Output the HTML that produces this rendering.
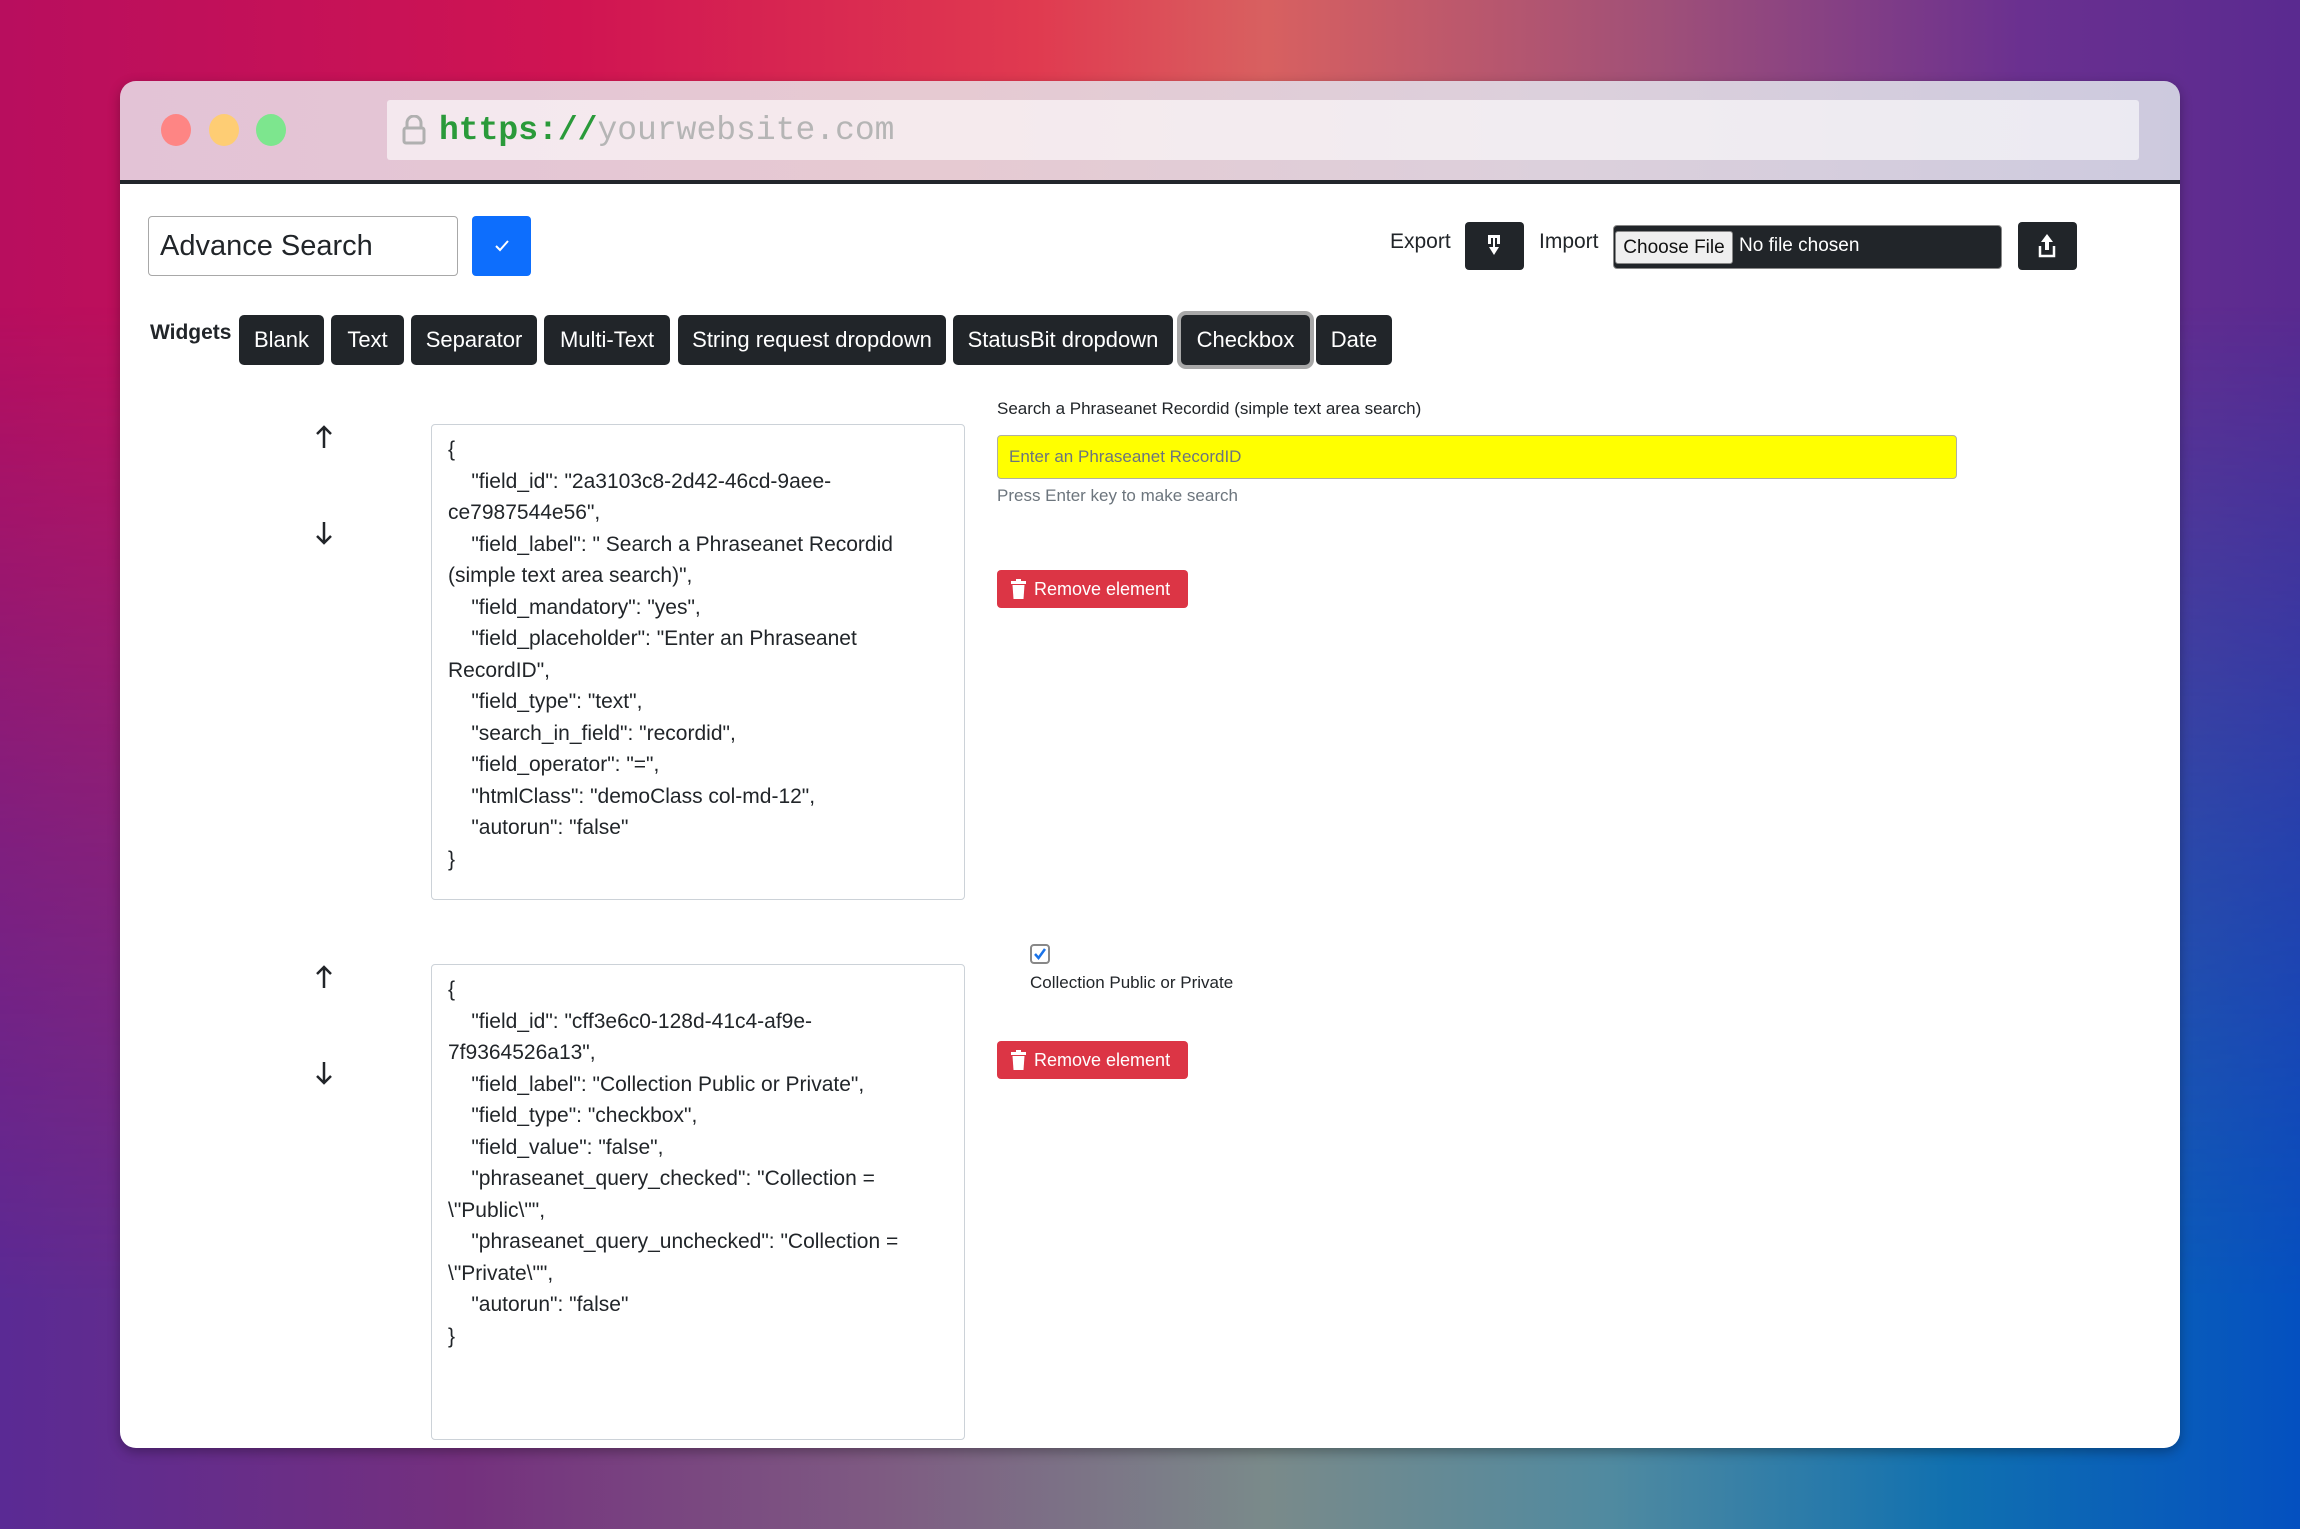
<!DOCTYPE html>
<html><head><meta charset="utf-8">
<style>
*{box-sizing:border-box;margin:0;padding:0}
body{width:2300px;height:1529px;position:relative;overflow:hidden;font-family:"Liberation Sans",Arial,sans-serif;color:#212529}
.bg1{position:absolute;inset:0;background:linear-gradient(90deg,#b80e5e 0%,#d01452 25%,#e03a50 45%,#d86060 55%,#a05078 72%,#6a3090 88%,#5a2a90 100%)}
.bg2{position:absolute;inset:0;background:linear-gradient(90deg,#5a2a94 0%,#74307e 20%,#7e5a82 38%,#7a8a8a 55%,#508aa0 70%,#1070b0 85%,#0450c0 100%);-webkit-mask-image:linear-gradient(180deg,transparent 20%,rgba(0,0,0,.6) 55%,#000 85%)}
.win{position:absolute;left:120px;top:81px;width:2060px;height:1367px;border-radius:16px;overflow:hidden;box-shadow:0 4px 12px rgba(0,0,0,.3)}
.title{position:absolute;left:0;top:0;width:100%;height:104px;background:linear-gradient(90deg,#e3c3d6,#e6cad2 40%,#dcd0dc 70%,#cdcade);border-bottom:5px solid #22262b}
.dot{position:absolute;top:33px;width:30px;height:32px;border-radius:50%}
.url{position:absolute;left:267px;top:19px;width:1752px;height:60px;background:rgba(255,255,255,.6);border-radius:3px}
.url span{position:absolute;left:52px;top:12px;font-family:"Liberation Mono",monospace;font-size:33px;color:#b5b5b5}
.content{position:absolute;left:0;top:103px;width:100%;height:1264px;background:#fff;overflow:hidden}
.inner{position:absolute;left:0;top:-79px;width:100%;height:1400px}
.a{position:absolute}
.btn{position:absolute;background:#212529;color:#fff;border-radius:5px;font-size:22px;line-height:50px;text-align:center;height:50px;top:210px}
pre{position:absolute;border:1px solid #ccd2d8;border-radius:4px;font-family:"Liberation Sans",Arial,sans-serif;font-size:21px;line-height:31.5px;padding:9px 16px;white-space:pre-wrap;color:#212529}
.rm{position:absolute;left:877px;width:191px;height:38px;background:#dc3545;color:#fff;border-radius:4px;font-size:18px;line-height:38px;padding-left:37px}
.rm svg{position:absolute;left:14px;top:9px}
.arr{position:absolute;left:194px}
</style></head><body>
<div class="bg1"></div><div class="bg2"></div>
<div class="win">
 <div class="title">
  <div class="dot" style="left:41px;background:#fe8584"></div>
  <div class="dot" style="left:89px;background:#fecd74"></div>
  <div class="dot" style="left:136px;background:#7de68e"></div>
  <div class="url">
   <svg style="position:absolute;left:15px;top:15px" width="24" height="30" viewBox="0 0 24 30"><path d="M5 13V8a7 7 0 0 1 14 0v5" fill="none" stroke="#b0b0b0" stroke-width="3"/><rect x="2" y="13" width="20" height="15" rx="2" fill="none" stroke="#b0b0b0" stroke-width="3"/></svg>
   <span><b style="color:#2a9a3a;font-weight:bold">https://</b>yourwebsite.com</span>
  </div>
 </div>
 <div class="content"><div class="inner">
  <div class="a" style="left:28px;top:111px;width:310px;height:60px;border:1px solid #a8a8a8;border-radius:4px;font-size:29px;line-height:58px;padding-left:11px">Advance Search</div>
  <div class="a" style="left:352px;top:111px;width:59px;height:60px;background:#0d6efd;border-radius:4px"><svg style="position:absolute;left:22px;top:23px" width="16" height="14" viewBox="0 0 16 14"><path d="M2 7l4 4 8-9" fill="none" stroke="#fff" stroke-width="2"/></svg></div>
  <div class="a" style="left:1270px;top:125px;font-size:21px">Export</div>
  <div class="a" style="left:1345px;top:117px;width:59px;height:48px;background:#212529;border-radius:4px"><svg style="position:absolute;left:20px;top:11px" width="18" height="26" viewBox="0 0 18 26"><path d="M3 2h12v9h-3v-6h-2v9h4l-5 8-5-8h4v-9h-2v6h-3z" fill="#fff"/></svg></div>
  <div class="a" style="left:1419px;top:125px;font-size:21px">Import</div>
  <div class="a" style="left:1493px;top:120px;width:389px;height:44px;background:#212529;border:1px solid #888;border-radius:4px">
   <div class="a" style="left:1px;top:5px;width:118px;height:33px;background:#efefef;border:1px solid #888;border-radius:3px;font-size:19px;line-height:31px;text-align:center;color:#111">Choose File</div>
   <div class="a" style="left:125px;top:9px;font-size:19px;color:#fff">No file chosen</div>
  </div>
  <div class="a" style="left:1898px;top:117px;width:59px;height:48px;background:#212529;border-radius:4px"><svg style="position:absolute;left:19px;top:11px" width="20" height="26" viewBox="0 0 20 26"><path d="M10 1l-6 8h4v8h4v-8h4z" fill="#fff"/><path d="M3 13v10h14v-10" fill="none" stroke="#fff" stroke-width="2.5"/></svg></div>

  <div class="a" style="left:30px;top:216px;font-size:21px;font-weight:bold">Widgets</div>
  <div class="btn" style="left:119px;width:85px">Blank</div>
  <div class="btn" style="left:211px;width:73px">Text</div>
  <div class="btn" style="left:291px;width:126px">Separator</div>
  <div class="btn" style="left:424px;width:126px">Multi-Text</div>
  <div class="btn" style="left:558px;width:268px">String request dropdown</div>
  <div class="btn" style="left:833px;width:220px">StatusBit dropdown</div>
  <div class="btn" style="left:1061px;width:129px;box-shadow:0 0 0 4px #a8a8a8">Checkbox</div>
  <div class="btn" style="left:1196px;width:76px">Date</div>

  <svg class="arr" style="top:319px" width="20" height="26" viewBox="0 0 20 26"><path d="M10 24V3M3 10l7-7 7 7" fill="none" stroke="#212529" stroke-width="2.5"/></svg>
  <svg class="arr" style="top:415px" width="20" height="26" viewBox="0 0 20 26"><path d="M10 2v21M3 16l7 7 7-7" fill="none" stroke="#212529" stroke-width="2.5"/></svg>
  <pre style="left:311px;top:319px;width:534px;height:476px">{
    "field_id": "2a3103c8-2d42-46cd-9aee-ce7987544e56",
    "field_label": " Search a Phraseanet Recordid (simple text area search)",
    "field_mandatory": "yes",
    "field_placeholder": "Enter an Phraseanet RecordID",
    "field_type": "text",
    "search_in_field": "recordid",
    "field_operator": "=",
    "htmlClass": "demoClass col-md-12",
    "autorun": "false"
}</pre>
  <div class="a" style="left:877px;top:294px;font-size:17px">Search a Phraseanet Recordid (simple text area search)</div>
  <div class="a" style="left:877px;top:330px;width:960px;height:44px;background:#ffff00;border:1px solid #b0b0a0;border-radius:4px;font-size:17px;line-height:42px;padding-left:11px;color:#6c757d">Enter an Phraseanet RecordID</div>
  <div class="a" style="left:877px;top:381px;font-size:17px;color:#6c757d">Press Enter key to make search</div>
  <div class="rm" style="top:465px"><svg width="15" height="20" viewBox="0 0 15 20"><rect x="0" y="2" width="15" height="3" fill="#fff"/><rect x="5" y="0" width="5" height="3" fill="#fff"/><path d="M1.5 6h12l-1 14h-10z" fill="#fff"/></svg>Remove element</div>

  <svg class="arr" style="top:859px" width="20" height="26" viewBox="0 0 20 26"><path d="M10 24V3M3 10l7-7 7 7" fill="none" stroke="#212529" stroke-width="2.5"/></svg>
  <svg class="arr" style="top:955px" width="20" height="26" viewBox="0 0 20 26"><path d="M10 2v21M3 16l7 7 7-7" fill="none" stroke="#212529" stroke-width="2.5"/></svg>
  <pre style="left:311px;top:859px;width:534px;height:476px">{
    "field_id": "cff3e6c0-128d-41c4-af9e-7f9364526a13",
    "field_label": "Collection Public or Private",
    "field_type": "checkbox",
    "field_value": "false",
    "phraseanet_query_checked": "Collection = \"Public\"",
    "phraseanet_query_unchecked": "Collection = \"Private\"",
    "autorun": "false"
}</pre>
  <div class="a" style="left:910px;top:839px;width:20px;height:20px;border:2px solid #888;border-radius:4px"><svg style="position:absolute;left:1px;top:1px" width="14" height="14" viewBox="0 0 14 14"><path d="M2 7l3.5 4L12 2" fill="none" stroke="#1a73e8" stroke-width="2.5"/></svg></div>
  <div class="a" style="left:910px;top:868px;font-size:17px">Collection Public or Private</div>
  <div class="rm" style="top:936px"><svg width="15" height="20" viewBox="0 0 15 20"><rect x="0" y="2" width="15" height="3" fill="#fff"/><rect x="5" y="0" width="5" height="3" fill="#fff"/><path d="M1.5 6h12l-1 14h-10z" fill="#fff"/></svg>Remove element</div>
 </div></div>
</div>
</body></html>
